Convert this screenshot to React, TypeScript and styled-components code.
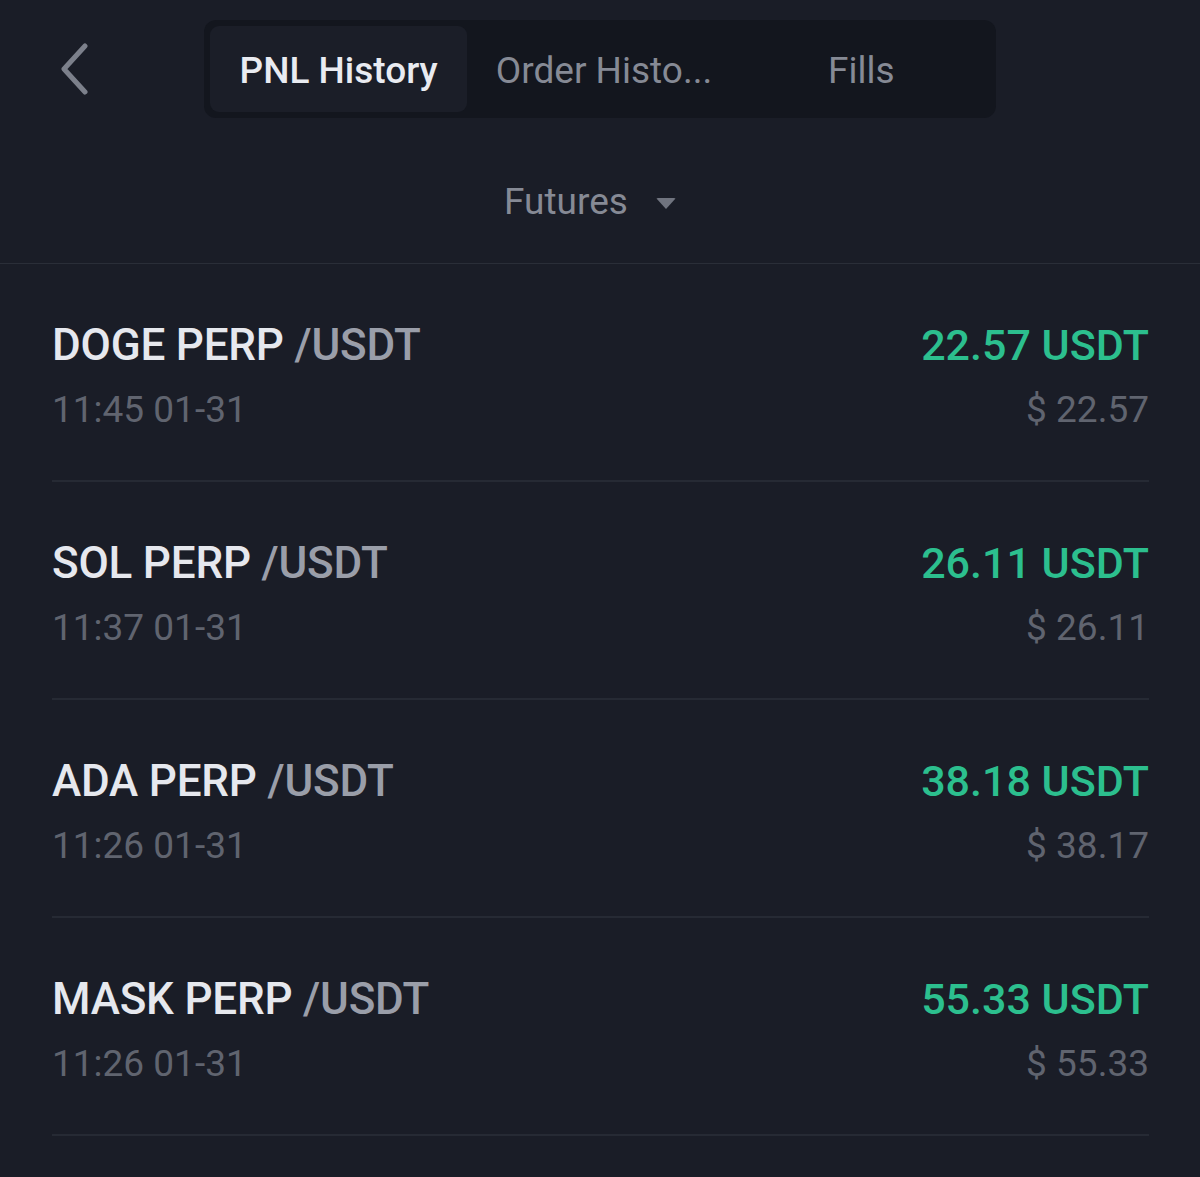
import { FC } from "react";
import styled, { createGlobalStyle } from "styled-components";

interface PnlRecord {
  base: string;
  time: string;
  pnl: string;
  usd: string;
}

const records: PnlRecord[] = [
  { base: "DOGE PERP", time: "11:45 01-31", pnl: "22.57", usd: "22.57" },
  { base: "SOL PERP", time: "11:37 01-31", pnl: "26.11", usd: "26.11" },
  { base: "ADA PERP", time: "11:26 01-31", pnl: "38.18", usd: "38.17" },
  { base: "MASK PERP", time: "11:26 01-31", pnl: "55.33", usd: "55.33" },
];

const tabs = ["PNL History", "Order Histo...", "Fills"];

const App: FC = () => {
  return (
    <Page>
      <GlobalStyle />
      <TopBar>
        <BackButton aria-label="back">
          <svg width="30" height="52" viewBox="0 0 30 52">
            <polyline
              points="25,3 4,26 25,49"
              fill="none"
              stroke="#7c808b"
              strokeWidth="5"
              strokeLinecap="round"
              strokeLinejoin="round"
            />
          </svg>
        </BackButton>
        <Tabs>
          {tabs.map((tab, index) => (
            <Tab key={tab} $active={index === 0}>
              {tab}
            </Tab>
          ))}
        </Tabs>
        <div />
      </TopBar>

      <FilterRow>
        <FilterLabel>Futures</FilterLabel>
        <Caret />
      </FilterRow>

      <List>
        {records.map((r, index) => (
          <Row key={index}>
            <Side>
              <Pair>
                {r.base} <Quote>/USDT</Quote>
              </Pair>
              <SubText>{r.time}</SubText>
            </Side>
            <Side $right>
              <Amount>{r.pnl} USDT</Amount>
              <SubText>$ {r.usd}</SubText>
            </Side>
          </Row>
        ))}
      </List>
    </Page>
  );
};

export default App;

const GlobalStyle = createGlobalStyle`
  html, body {
    margin: 0;
    padding: 0;
    background: #1a1d27;
  }
  * {
    box-sizing: border-box;
  }
`;

const Page = styled.div`
  width: 1200px;
  height: 1177px;
  overflow: hidden;
  background: #1a1d27;
  font-family: Roboto, "Noto Sans", sans-serif;
`;

const TopBar = styled.header`
  display: grid;
  grid-template-columns: 1fr 792px 1fr;
  align-items: center;
  padding-top: 20px;
`;

const BackButton = styled.button`
  justify-self: start;
  display: flex;
  align-items: center;
  margin-left: 60px;
  padding: 0;
  border: none;
  background: transparent;
`;

const Tabs = styled.nav`
  display: flex;
  height: 98px;
  padding: 6px;
  border-radius: 12px;
  background: #13161e;
`;

const Tab = styled.div<{ $active?: boolean }>`
  flex: 1;
  display: flex;
  align-items: center;
  justify-content: center;
  padding-top: 3px;
  border-radius: 9px;
  font-size: 37px;
  font-weight: ${({ $active }) => ($active ? 500 : 400)};
  color: ${({ $active }) => ($active ? "#e9ebf1" : "#868a95")};
  background: ${({ $active }) => ($active ? "#1b1e28" : "transparent")};
  margin-right: ${({ $active }) => ($active ? "8px" : "0")};
`;

const FilterRow = styled.div`
  display: flex;
  justify-content: center;
  align-items: center;
  gap: 28px;
  height: 146px;
  padding: 22px 20px 0 0;
  border-bottom: 1px solid #2a2e38;
`;

const FilterLabel = styled.span`
  font-size: 37px;
  color: #868a95;
`;

const Caret = styled.span`
  width: 0;
  height: 0;
  margin-top: 4px;
  border-left: 10px solid transparent;
  border-right: 10px solid transparent;
  border-top: 11px solid #70747f;
  border-radius: 2px;
`;

const List = styled.div`
  display: flex;
  flex-direction: column;
  padding: 0 51px 0 52px;
`;

const Row = styled.div`
  display: flex;
  justify-content: space-between;
  height: 218px;
  padding-top: 53px;
  border-bottom: 2px solid #262a34;
`;

const Side = styled.div<{ $right?: boolean }>`
  display: flex;
  flex-direction: column;
  gap: 13px;
  align-items: ${({ $right }) => ($right ? "flex-end" : "flex-start")};
`;

const Pair = styled.div`
  font-size: 44px;
  font-weight: 500;
  line-height: 56px;
  letter-spacing: -0.2px;
  color: #e6e8ee;
`;

const Quote = styled.span`
  color: #9a9ea9;
`;

const Amount = styled.div`
  font-size: 43px;
  font-weight: 500;
  line-height: 56px;
  color: #2cbf8e;
`;

const SubText = styled.div`
  font-size: 37px;
  line-height: 48px;
  color: #60646f;
`;
